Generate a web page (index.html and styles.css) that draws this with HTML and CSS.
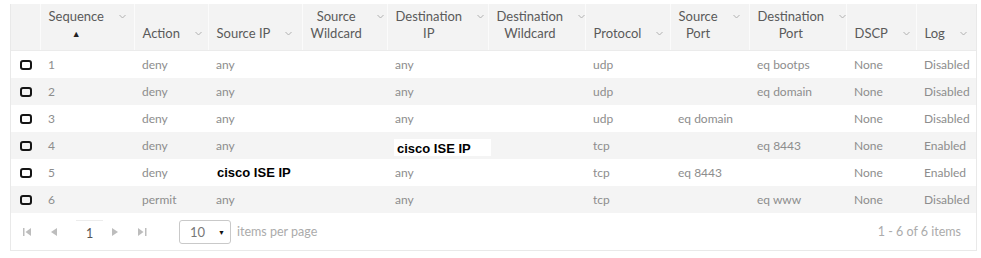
FILE: index.html
```html
<!DOCTYPE html>
<html>
<head>
<meta charset="utf-8">
<link rel="stylesheet" href="styles.css">
</head>
<body>
<div class="grid-wrap">
  <table class="acl">
    <colgroup>
      <col class="c-chk"><col class="c-seq"><col class="c-act"><col class="c-sip"><col class="c-swc"><col class="c-dip"><col class="c-dwc"><col class="c-pro"><col class="c-spt"><col class="c-dpt"><col class="c-dscp"><col class="c-log">
    </colgroup>
    <thead>
      <tr>
        <th></th>
        <th><div class="hc"><div class="hl">Sequence<br><span class="sort">&#9650;</span></div><svg class="chev" width="7" height="17" viewBox="0 0 7 17"><polyline points="0.5,7 3.5,10 6.5,7" /></svg></div></th>
        <th><div class="hc"><div class="hl">Action</div><svg class="chev" width="7" height="17" viewBox="0 0 7 17"><polyline points="0.5,7 3.5,10 6.5,7" /></svg></div></th>
        <th><div class="hc"><div class="hl">Source IP</div><svg class="chev" width="7" height="17" viewBox="0 0 7 17"><polyline points="0.5,7 3.5,10 6.5,7" /></svg></div></th>
        <th><div class="hc"><div class="hl">Source<br>Wildcard</div><svg class="chev" width="7" height="17" viewBox="0 0 7 17"><polyline points="0.5,7 3.5,10 6.5,7" /></svg></div></th>
        <th><div class="hc"><div class="hl">Destination<br>IP</div><svg class="chev" width="7" height="17" viewBox="0 0 7 17"><polyline points="0.5,7 3.5,10 6.5,7" /></svg></div></th>
        <th><div class="hc"><div class="hl">Destination<br>Wildcard</div><svg class="chev" width="7" height="17" viewBox="0 0 7 17"><polyline points="0.5,7 3.5,10 6.5,7" /></svg></div></th>
        <th><div class="hc"><div class="hl">Protocol</div><svg class="chev" width="7" height="17" viewBox="0 0 7 17"><polyline points="0.5,7 3.5,10 6.5,7" /></svg></div></th>
        <th><div class="hc"><div class="hl">Source<br>Port</div><svg class="chev" width="7" height="17" viewBox="0 0 7 17"><polyline points="0.5,7 3.5,10 6.5,7" /></svg></div></th>
        <th><div class="hc"><div class="hl">Destination<br>Port</div><svg class="chev" width="7" height="17" viewBox="0 0 7 17"><polyline points="0.5,7 3.5,10 6.5,7" /></svg></div></th>
        <th><div class="hc"><div class="hl">DSCP</div><svg class="chev" width="7" height="17" viewBox="0 0 7 17"><polyline points="0.5,7 3.5,10 6.5,7" /></svg></div></th>
        <th><div class="hc"><div class="hl">Log</div><svg class="chev" width="7" height="17" viewBox="0 0 7 17"><polyline points="0.5,7 3.5,10 6.5,7" /></svg></div></th>
      </tr>
    </thead>
    <tbody>
      <tr>
        <td class="chk"><span class="box"></span></td><td>1</td><td>deny</td><td>any</td><td></td><td>any</td><td></td><td>udp</td><td></td><td>eq bootps</td><td>None</td><td class="log">Disabled</td>
      </tr>
      <tr>
        <td class="chk"><span class="box"></span></td><td>2</td><td>deny</td><td>any</td><td></td><td>any</td><td></td><td>udp</td><td></td><td>eq domain</td><td>None</td><td class="log">Disabled</td>
      </tr>
      <tr>
        <td class="chk"><span class="box"></span></td><td>3</td><td>deny</td><td>any</td><td></td><td>any</td><td></td><td>udp</td><td>eq domain</td><td></td><td>None</td><td class="log">Disabled</td>
      </tr>
      <tr>
        <td class="chk"><span class="box"></span></td><td>4</td><td>deny</td><td>any</td><td></td><td class="paste-cell"><span class="paste">cisco ISE IP</span></td><td></td><td>tcp</td><td></td><td>eq 8443</td><td>None</td><td class="log">Enabled</td>
      </tr>
      <tr>
        <td class="chk"><span class="box"></span></td><td>5</td><td>deny</td><td><span class="bold-ip">cisco ISE IP</span></td><td></td><td>any</td><td></td><td>tcp</td><td>eq 8443</td><td></td><td>None</td><td class="log">Enabled</td>
      </tr>
      <tr>
        <td class="chk"><span class="box"></span></td><td>6</td><td>permit</td><td>any</td><td></td><td>any</td><td></td><td>tcp</td><td></td><td>eq www</td><td>None</td><td class="log">Disabled</td>
      </tr>
    </tbody>
  </table>
  <div class="footer">
    <div class="pager">
      <svg class="pg first" width="8" height="8" viewBox="0 0 8 8"><rect x="0" y="0" width="1.5" height="8"/><polygon points="8,0 8,8 2.5,4"/></svg>
      <svg class="pg prev" width="7" height="8" viewBox="0 0 7 8"><polygon points="7,0 7,8 1,4"/></svg>
      <span class="page">1</span>
      <svg class="pg next" width="7" height="8" viewBox="0 0 7 8"><polygon points="0,0 0,8 6,4"/></svg>
      <svg class="pg last" width="9" height="8" viewBox="0 0 9 8"><polygon points="0,0 0,8 5.5,4"/><rect x="7" y="0" width="1.5" height="8"/></svg>
      <div class="size-select"><span class="size-val">10</span><span class="caret">&#9660;</span></div>
      <span class="ipp">items per page</span>
    </div>
    <span class="count">1 - 6 of 6 items</span>
  </div>
</div>
</body>
</html>
```
FILE: styles.css
```css
html, body {
  margin: 0;
  padding: 0;
  background: #ffffff;
}

.grid-wrap {
  margin: 4px 0 0 10px;
  width: 965px;
  border: 1px solid #e9e9e9;
  border-top: none;
  font-family: Lato, "Liberation Sans", sans-serif;
}

.acl {
  width: 965px;
  border-collapse: collapse;
  table-layout: fixed;
}

.c-chk { width: 29px; }
.c-seq { width: 94px; }
.c-act { width: 74px; }
.c-sip { width: 94px; }
.c-swc { width: 85px; }
.c-dip { width: 101px; }
.c-dwc { width: 97px; }
.c-pro { width: 85px; }
.c-spt { width: 79px; }
.c-dpt { width: 97px; }
.c-dscp { width: 70px; }
.c-log { width: 60px; }

.acl thead th {
  background: #f3f3f3;
  border-left: 1px solid #fbfbfb;
  border-bottom: 1px solid #ebebeb;
  height: 33px;
  padding: 4px 0 8px 8px;
  vertical-align: bottom;
  text-align: left;
  font-weight: 400;
  font-size: 13px;
  line-height: 17px;
  color: #5a5a5a;
}

.acl thead th:first-child {
  border-left: none;
}

.hc {
  display: flex;
  align-items: flex-start;
}

.hl {
  text-align: center;
  white-space: nowrap;
}

.sort {
  font-size: 9px;
  color: #222;
  vertical-align: top;
}

.chev {
  margin-left: 15px;
  flex: none;
  fill: none;
  stroke: #b0b0b0;
  stroke-width: 1;
}

.acl tbody tr {
  height: 27px;
}

.acl tbody td {
  height: 27px;
  padding: 0 8px;
  font-size: 12px;
  line-height: 16px;
  color: #8d8d8d;
  white-space: nowrap;
  vertical-align: middle;
}

.acl tbody tr:nth-child(even) td {
  background: #f4f4f4;
}

.acl tbody td.chk {
  padding: 0 0 0 9px;
}

.box {
  display: block;
  width: 8px;
  height: 6px;
  border: 2px solid #151515;
  border-radius: 3px;
}

.acl tbody td.log {
  text-align: right;
  padding-right: 10px;
}

.bold-ip {
  font-family: "Liberation Sans", Arial, sans-serif;
  font-weight: 700;
  font-size: 13px;
  line-height: 16px;
  color: #000;
  margin-left: 1px;
}

.acl tbody td.paste-cell {
  padding: 0 0 0 7px;
}

.paste {
  display: inline-block;
  vertical-align: -5px;
  width: 94px;
  height: 17px;
  padding-left: 3px;
  background: #ffffff;
  font-family: "Liberation Sans", Arial, sans-serif;
  font-weight: 700;
  font-size: 13px;
  line-height: 19px;
  color: #000;
}

.footer {
  display: flex;
  align-items: center;
  justify-content: space-between;
  height: 37px;
  padding: 0 15px 0 12px;
  font-size: 12px;
  color: #a8a8a8;
}

.pager {
  display: flex;
  align-items: center;
}

.pg {
  fill: #bdbdbd;
  flex: none;
}

.prev { margin-left: 19px; }

.page {
  margin-left: 19px;
  width: 27px;
  height: 24px;
  line-height: 25px;
  text-align: center;
  border-top: 1px solid #ececec;
  box-sizing: border-box;
  color: #555;
  font-size: 12.5px;
}

.next { margin-left: 9px; }
.last { margin-left: 19px; }

.size-select {
  margin-left: 32px;
  width: 52px;
  height: 24px;
  box-sizing: border-box;
  border: 1px solid #c9c9c9;
  border-radius: 3px;
  display: flex;
  align-items: center;
  padding-left: 10px;
  font-size: 13px;
  color: #777;
}

.caret {
  margin-left: 13px;
  font-size: 7px;
  color: #111;
}

.ipp {
  margin-left: 6px;
  font-size: 12.5px;
  color: #ababab;
}

.count {
  font-size: 12.5px;
  color: #ababab;
}
```
